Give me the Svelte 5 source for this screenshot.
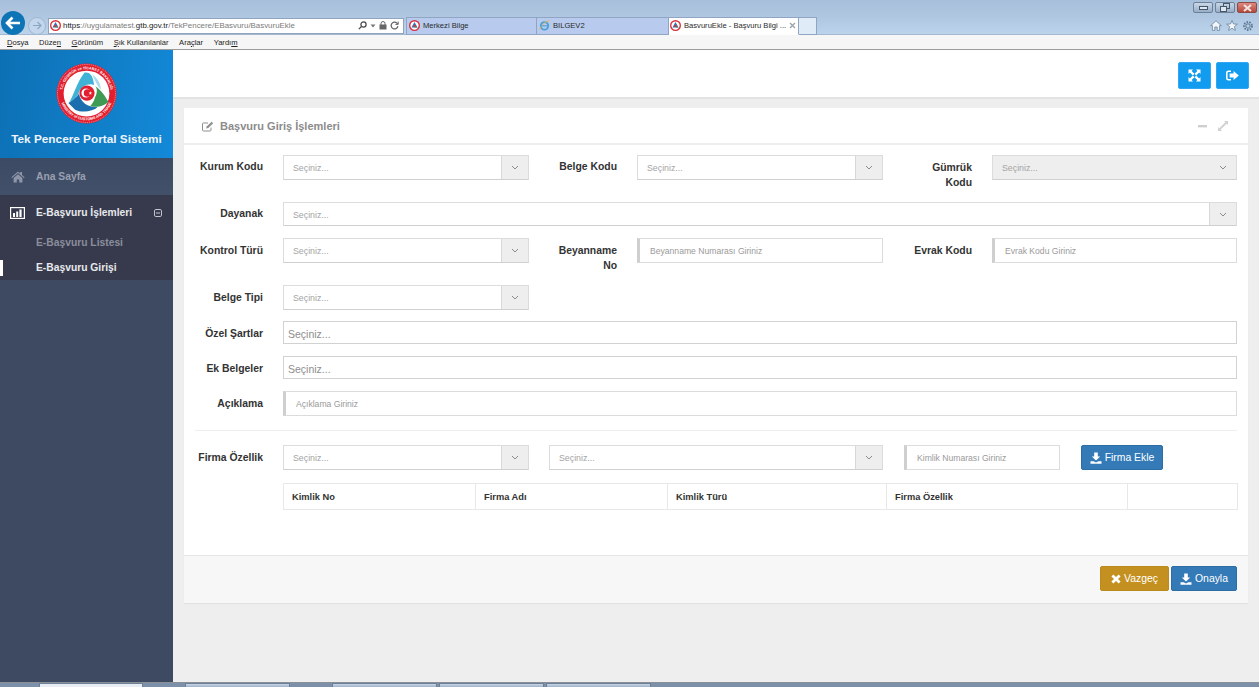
<script>
  const menus = [
    { pre: '', key: 'D', post: 'osya' },
    { pre: 'Düze', key: 'n', post: '' },
    { pre: '', key: 'G', post: 'örünüm' },
    { pre: '', key: 'Ş', post: 'ık Kullanılanlar' },
    { pre: 'Ara', key: 'ç', post: 'lar' },
    { pre: 'Yardı', key: 'm', post: '' }
  ];
  const columns = [
    { name: 'Kimlik No', width: 192 },
    { name: 'Firma Adı', width: 192 },
    { name: 'Kimlik Türü', width: 219 },
    { name: 'Firma Özellik', width: 241 },
    { name: '', width: 110 }
  ];
</script>

{#snippet favicon(size)}
  <svg class="favicon" width={size} height={size} viewBox="0 0 16 16">
    <circle cx="8" cy="8" r="7" fill="#fff" stroke="#d8303c" stroke-width="2" />
    <path d="M8 3 L12.5 11 H3.5 Z" fill="#2f78b7" />
    <path d="M8 8 L12.5 11 H8 Z" fill="#4f9a55" />
    <circle cx="8" cy="8.5" r="1.7" fill="#d8303c" />
  </svg>
{/snippet}

{#snippet download()}
  <svg class="btn-icon" width="12" height="12" viewBox="0 0 12 12" fill="#fff">
    <path d="M4.2 0.5 H7.8 V4.6 H10.2 L6 8.6 L1.8 4.6 H4.2 Z" />
    <path d="M0.5 9.2 H3.6 L6 10.6 L8.4 9.2 H11.5 V11.7 H0.5 Z" />
  </svg>
{/snippet}

{#snippet select(placeholder, cls = '')}
  <div class="select {cls}">
    <span class="value">{placeholder}</span>
    <span class="arrow">
      <svg width="8" height="5" viewBox="0 0 8 5" fill="none" stroke="#8b8b8b" stroke-width="1"><path d="M1 1 L4 4 L7 1" /></svg>
    </span>
  </div>
{/snippet}

<div class="page">
  <header class="browser">
    <div class="caption">
      <div class="win-btn">
        <svg width="9" height="4" viewBox="0 0 9 4"><rect x="0.5" y="0.5" width="8" height="3" fill="#dfe6ee" stroke="#44566c" /></svg>
      </div>
      <div class="win-btn">
        <svg width="10" height="9" viewBox="0 0 10 9" fill="none" stroke="#44566c"><rect x="3.5" y="0.5" width="6" height="5" /><rect x="0.5" y="3.5" width="6" height="5" fill="#dfe6ee" /></svg>
      </div>
      <div class="win-btn close">
        <svg width="9" height="8" viewBox="0 0 9 8" stroke="#f4e4e2" stroke-width="2"><path d="M1 1 L8 7 M8 1 L1 7" /></svg>
      </div>
    </div>

    <div class="toolbar">
      <div class="back">
        <svg width="16" height="14" viewBox="0 0 16 14" fill="none" stroke="#fff" stroke-width="2.6"><path d="M7.5 1.5 L2 7 L7.5 12.5 M2.5 7 H15" /></svg>
      </div>
      <div class="forward">
        <svg width="10" height="9" viewBox="0 0 10 9" fill="none" stroke="#8ba6c4" stroke-width="1.2"><path d="M5.5 1 L9 4.5 L5.5 8 M9 4.5 H1" /></svg>
      </div>
      <div class="address">
        {@render favicon(11)}
        <span class="url"><span class="strong">https</span>://uygulamatest.<span class="strong">gtb.gov.tr</span>/TekPencere/EBasvuru/BasvuruEkle</span>
        <span class="address-tools">
          <svg width="9" height="9" viewBox="0 0 9 9" fill="none" stroke="#444" stroke-width="1.2"><circle cx="5.5" cy="3.5" r="2.6" /><path d="M3.5 5.5 L0.8 8.2" /></svg>
          <svg width="6" height="4" viewBox="0 0 6 4" fill="#777"><path d="M0.5 0.5 H5.5 L3 3.5 Z" /></svg>
          <svg width="8" height="9" viewBox="0 0 8 9"><rect x="0.5" y="3.5" width="7" height="5" fill="#666" /><path d="M2 4 V2.5 a2 2 0 0 1 4 0 V4" fill="none" stroke="#666" /></svg>
          <svg width="9" height="9" viewBox="0 0 9 9" fill="none" stroke="#666" stroke-width="1.3"><path d="M7.6 3 A3.4 3.4 0 1 0 7.9 5.2" /><path d="M8.2 0.6 V3.4 H5.4" stroke-width="1" /></svg>
        </span>
      </div>
      <div class="tabs">
        <div class="tab">{@render favicon(11)}<span>Merkezi Bilge</span></div>
        <div class="tab">
          <svg class="favicon" width="11" height="11" viewBox="0 0 16 16" fill="none">
            <circle cx="8" cy="8.5" r="5.5" stroke="#4c9fd8" stroke-width="2.6" />
            <path d="M1 14 C4 6 10 2 15 1" stroke="#e3b64a" stroke-width="1.4" />
            <path d="M3 8.5 H13" stroke="#4c9fd8" stroke-width="1.6" />
          </svg>
          <span>BILGEV2</span>
        </div>
        <div class="tab active">
          {@render favicon(11)}
          <span class="tab-title">BasvuruEkle - Başvuru Bilgi ...</span>
          <svg class="tab-close" width="7" height="7" viewBox="0 0 7 7" stroke="#9aa3ad" stroke-width="1.4"><path d="M1 1 L6 6 M6 1 L1 6" /></svg>
        </div>
        <div class="tab new"></div>
      </div>
      <div class="ie-tools">
        <svg width="12" height="11" viewBox="0 0 12 11" fill="#f2f5f8" stroke="#5f7894" stroke-width="0.7"><path d="M6 0.8 L11.3 5.6 H9.6 V10.4 H7.2 V7 H4.8 V10.4 H2.4 V5.6 H0.7 Z" /></svg>
        <svg width="12" height="11" viewBox="0 0 12 11" fill="#f2f5f8" stroke="#5f7894" stroke-width="0.7"><path d="M6 0.5 L7.5 4 L11.4 4.2 L8.4 6.6 L9.4 10.4 L6 8.3 L2.6 10.4 L3.6 6.6 L0.6 4.2 L4.5 4 Z" /></svg>
        <svg width="12" height="12" viewBox="0 0 12 12" fill="none"><circle cx="6" cy="6" r="2.2" stroke="#5f7894" /><circle cx="6" cy="6" r="4" stroke="#5f7894" stroke-width="1.8" stroke-dasharray="1.6 1.2" /></svg>
      </div>
    </div>

    <nav class="menubar">
      {#each menus as m}
        <span>{m.pre}<u>{m.key}</u>{m.post}</span>
      {/each}
    </nav>
  </header>

  <div class="app">
    <aside class="sidebar">
      <div class="brand">
        <svg width="61" height="61" viewBox="0 0 64 64">
          <defs>
            <path id="ringTop" d="M6.5 32 A25.5 25.5 0 0 1 57.5 32" />
            <path id="ringBottom" d="M4 32 A28 28 0 0 0 60 32" />
          </defs>
          <circle cx="32" cy="32" r="31.5" fill="#e21f2f" />
          <circle cx="32" cy="32" r="30.4" fill="none" stroke="#fff" stroke-width="0.5" stroke-dasharray="1 1" />
          <circle cx="32" cy="32" r="24" fill="#fff" />
          <text class="ring-text"><textPath href="#ringTop" startOffset="50%" text-anchor="middle">T.C. GÜMRÜK ve TİCARET BAKANLIĞI</textPath></text>
          <text class="ring-text"><textPath href="#ringBottom" startOffset="50%" text-anchor="middle">MINISTRY of CUSTOMS AND TRADE</textPath></text>
          <path d="M38 12 C44 16 47 22 47 28 C44 25 41 19 38 12 Z" fill="#a9d9ef" />
          <path d="M30 10 C36 9 39 14 40 23 C34 21 27 24 24 31 C22 36 20 38 14 41 C19 33 22 20 30 10 Z" fill="#3fb2d6" />
          <path d="M13 42 C18 39 22 36 24 32 C26 42 34 47 44 46 C38 52 26 52 20 49 Z" fill="#1b6fae" />
          <path d="M41 36 C44 30 43 26 41 24 C48 29 52 35 55 41 C50 46 42 47 36 45 C38 43 40 40 41 36 Z" fill="#3f9a54" />
          <circle cx="32.5" cy="31.5" r="8" fill="#e21f2f" />
          <circle cx="31.5" cy="31.5" r="4.8" fill="#fff" />
          <circle cx="33" cy="31.5" r="3.9" fill="#e21f2f" />
          <path d="M36 29.7 L36.5 31 L37.9 31 L36.8 31.8 L37.2 33.2 L36 32.4 L34.9 33.2 L35.3 31.8 L34.2 31 L35.6 31 Z" fill="#fff" />
        </svg>
        <div class="brand-name">Tek Pencere Portal Sistemi</div>
      </div>

      <div class="nav-home">
        <svg width="14" height="12" viewBox="0 0 14 12" fill="#8d96a8"><path d="M7 0.6 L9.2 2.5 V1 H11 V4 L13.6 6.3 L12.9 7 L7 2 L1.1 7 L0.4 6.3 Z" /><path d="M2.6 7 L7 3.3 L11.4 7 V11.6 H8.2 V8.4 H5.8 V11.6 H2.6 Z" /></svg>
        <span>Ana Sayfa</span>
      </div>

      <div class="nav-group">
        <div class="nav-head">
          <svg width="15" height="12" viewBox="0 0 15 12">
            <rect x="0.6" y="0.6" width="13.8" height="10.8" fill="none" stroke="#fff" stroke-width="1.2" />
            <path d="M3 6 H5 V10 H3 Z M6.2 4.5 H8.2 V10 H6.2 Z M9.4 2.5 H11.6 V10 H9.4 Z" fill="#fff" />
          </svg>
          <span class="nav-head-label">E-Başvuru İşlemleri</span>
          <svg width="8" height="8" viewBox="0 0 8 8" fill="none" stroke="#c3c6cf"><rect x="0.5" y="0.5" width="7" height="7" rx="1.4" /><path d="M2 4 H6" /></svg>
        </div>
        <div class="nav-sub">E-Başvuru Listesi</div>
        <div class="nav-sub current">E-Başvuru Girişi</div>
      </div>
    </aside>

    <main class="content">
      <div class="topbar">
        <button class="square" aria-label="Tam ekran">
          <svg width="13" height="13" viewBox="0 0 13 13" fill="#fff">
            <path d="M0.5 0.5 H5 L3.6 1.9 L6.5 4.8 L4.8 6.5 L1.9 3.6 L0.5 5 Z" />
            <path d="M12.5 0.5 V5 L11.1 3.6 L8.2 6.5 L6.5 4.8 L9.4 1.9 L8 0.5 Z" />
            <path d="M0.5 12.5 V8 L1.9 9.4 L4.8 6.5 L6.5 8.2 L3.6 11.1 L5 12.5 Z" />
            <path d="M12.5 12.5 H8 L9.4 11.1 L6.5 8.2 L8.2 6.5 L11.1 9.4 L12.5 8 Z" />
          </svg>
        </button>
        <button class="square" aria-label="Çıkış">
          <svg width="13" height="11" viewBox="0 0 13 11" fill="#fff">
            <path d="M5 0.5 V2 H2.6 Q1.6 2 1.6 3 V8 Q1.6 9 2.6 9 H5 V10.5 H2.4 Q0 10.5 0 8.2 V2.8 Q0 0.5 2.4 0.5 Z" />
            <path d="M7.6 1 L12.8 5.5 L7.6 10 V7.4 H3.6 V3.6 H7.6 Z" />
          </svg>
        </button>
      </div>

      <section class="panel">
        <div class="panel-head">
          <svg width="12" height="11" viewBox="0 0 12 11" fill="none" stroke="#8f8f8f" stroke-width="1">
            <path d="M9 6.6 V9 Q9 10 8 10 H1.5 Q0.5 10 0.5 9 V3 Q0.5 2 1.5 2 H6" />
            <path d="M4.2 7.6 L4.6 5.4 L9.6 0.8 L11.2 2.3 L6.3 7.1 Z" fill="#8f8f8f" stroke="none" />
          </svg>
          <span class="panel-title">Başvuru Giriş İşlemleri</span>
          <span class="panel-tools">
            <svg width="9" height="3" viewBox="0 0 9 3"><rect width="9" height="2.4" fill="#cfcfcf" /></svg>
            <svg width="10" height="10" viewBox="0 0 10 10" fill="#d2d2d2"><path d="M6 0 H10 V4 L8.6 2.7 L2.7 8.6 L4 10 H0 V6 L1.3 7.3 L7.3 1.3 Z" /></svg>
          </span>
        </div>

        <div class="panel-body">
          <div class="form-grid">
            <label class="tight">Kurum Kodu</label>
            {@render select('Seçiniz...')}
            <label class="tight">Belge Kodu</label>
            {@render select('Seçiniz...')}
            <label class="wrap">Gümrük Kodu</label>
            {@render select('Seçiniz...', 'disabled')}

            <label class="tight">Dayanak</label>
            <div class="wide">{@render select('Seçiniz...', 'short')}</div>

            <label>Kontrol Türü</label>
            {@render select('Seçiniz...')}
            <label class="wrap">Beyanname No</label>
            <div class="input">Beyanname Numarası Giriniz</div>
            <label>Evrak Kodu</label>
            <div class="input">Evrak Kodu Giriniz</div>

            <label>Belge Tipi</label>
            <div class="fill-row">{@render select('Seçiniz...')}</div>

            <label class="row-start">Özel Şartlar</label>
            <div class="wide plain">Seçiniz...</div>

            <label>Ek Belgeler</label>
            <div class="wide plain">Seçiniz...</div>

            <label>Açıklama</label>
            <div class="wide input">Açıklama Giriniz</div>
          </div>

          <hr />

          <div class="firma-row">
            <label>Firma Özellik</label>
            <div class="firma-a">{@render select('Seçiniz...')}</div>
            <div class="firma-b">{@render select('Seçiniz...')}</div>
            <div class="input firma-id">Kimlik Numarası Giriniz</div>
            <button class="btn blue firma-btn">{@render download()}Firma Ekle</button>
          </div>

          <table>
            <thead>
              <tr>
                {#each columns as c}
                  <th style="width:{c.width}px">{c.name}</th>
                {/each}
              </tr>
            </thead>
          </table>
        </div>

        <div class="panel-foot">
          <button class="btn gold">
            <svg class="btn-icon" width="10" height="10" viewBox="0 0 10 10" stroke="#fff" stroke-width="2.8"><path d="M1.4 1.4 L8.6 8.6 M8.6 1.4 L1.4 8.6" /></svg>
            Vazgeç
          </button>
          <button class="btn blue">{@render download()}Onayla</button>
        </div>
      </section>
    </main>
  </div>

  <footer class="taskbar">
    <div class="task first"></div>
    <div class="task t2"></div>
    <div class="task t3"></div>
    <div class="task"></div>
    <div class="task"></div>
  </footer>
</div>

<style>
  :global(body) { margin: 0; background: #eee; overflow: hidden; }
  .page {
    width: 1259px;
    height: 687px;
    display: flex;
    flex-direction: column;
    overflow: hidden;
    font-family: "Liberation Sans", Arial, sans-serif;
    color: #333;
  }

  /* browser chrome */
  .browser { flex: none; height: 50px; box-sizing: border-box; border-bottom: 1px solid #9c9c9c; background: #f6f6f6; }
  .caption {
    height: 17px;
    display: flex;
    justify-content: flex-end;
    gap: 2px;
    padding: 2px 2px 0 0;
    box-sizing: border-box;
    background: linear-gradient(#a7bfda, #afc7e0);
  }
  .win-btn {
    width: 20px;
    height: 11px;
    border: 1px solid #6c8097;
    border-radius: 2px;
    background: linear-gradient(#cad8e7, #98aec6);
    display: flex;
    align-items: center;
    justify-content: center;
    box-sizing: border-box;
  }
  .win-btn.close { background: linear-gradient(#dd8a80, #b5473b); border-color: #8e4a44; }
  .toolbar {
    height: 18px;
    display: flex;
    align-items: center;
    background: linear-gradient(#afc7e0, #bcd3ec);
    border-bottom: 1px solid #a3b8d0;
    box-sizing: border-box;
  }
  .back {
    flex: none;
    width: 24px;
    height: 24px;
    margin: -6px 0 0 1px;
    border-radius: 50%;
    background: #0d74b6;
    display: flex;
    align-items: center;
    justify-content: center;
  }
  .forward {
    flex: none;
    width: 16px;
    height: 16px;
    margin: 0 0 0 3px;
    border-radius: 50%;
    border: 1px solid #9fb6d2;
    background: #c3d6ec;
    display: flex;
    align-items: center;
    justify-content: center;
  }
  .address {
    flex: none;
    width: 356px;
    height: 16px;
    margin-left: 2px;
    box-sizing: border-box;
    border: 1px solid #8fa5bf;
    background: #fff;
    display: flex;
    align-items: center;
    gap: 2px;
    padding-left: 1px;
    font: 7.9px "Liberation Sans", sans-serif;
    color: #7b7b7b;
  }
  .url { white-space: nowrap; }
  .strong { color: #222; }
  .address-tools { margin-left: auto; display: flex; align-items: center; gap: 3px; padding-right: 4px; }
  .favicon { flex: none; }
  .tabs { display: flex; margin-left: 2px; height: 18px; }
  .tab {
    width: 132px;
    box-sizing: border-box;
    background: #b8cbee;
    border: 1px solid #8fa5c2;
    border-left-width: 0;
    display: flex;
    align-items: center;
    gap: 3px;
    padding-left: 2px;
    font: 7.6px "Liberation Sans", sans-serif;
    color: #2a2a2a;
    white-space: nowrap;
  }
  .tab:first-child { border-left-width: 1px; width: 131px; padding-left: 2px; }
  .tab.active { width: 130px; background: #fff; border-bottom-color: #fff; padding-left: 1px; }
  .tab-title { flex: 1; }
  .tab-close { flex: none; margin-right: 3px; }
  .tab.new { width: 18px; background: #e0ebf8; padding: 0; }
  .ie-tools { margin-left: auto; display: flex; align-items: center; gap: 4px; padding-right: 5px; }
  .menubar {
    height: 14px;
    display: flex;
    align-items: center;
    gap: 10.5px;
    padding-left: 7px;
    font: 7.6px "Liberation Sans", sans-serif;
    color: #222;
  }

  /* app */
  .app { flex: 1; display: flex; min-height: 0; }
  .sidebar { flex: none; width: 173px; background: #3e4a62; display: flex; flex-direction: column; }
  .brand {
    height: 108px;
    background: linear-gradient(100deg, #0d70b4, #1389d8);
    display: flex;
    flex-direction: column;
    align-items: center;
    padding-top: 13px;
    box-sizing: border-box;
  }
  .ring-text { font: bold 3.9px "Liberation Sans", sans-serif; fill: #fff; }
  .brand-name { margin-top: 8px; color: #eef5fb; font-size: 11.8px; font-weight: bold; }
  .nav-home {
    height: 37px;
    display: flex;
    align-items: center;
    gap: 11px;
    padding-left: 11px;
    background: linear-gradient(#3c4a63, #425069);
    color: #99a0b0;
    font-size: 10.3px;
    font-weight: bold;
  }
  .nav-group { background: #373a4c; height: 85px; display: flex; flex-direction: column; }
  .nav-head {
    height: 35px;
    display: flex;
    align-items: center;
    padding: 0 11px 0 10px;
    color: #e8e9ec;
    font-size: 10.3px;
    font-weight: bold;
  }
  .nav-head-label { flex: 1; margin-left: 11px; }
  .nav-sub {
    height: 25px;
    display: flex;
    align-items: center;
    padding-left: 36px;
    font-size: 10.3px;
    font-weight: bold;
    color: #8a8e9c;
    box-sizing: border-box;
  }
  .nav-sub.current { color: #e8e9ec; padding-left: 0; }
  .nav-sub.current::before { content: ''; width: 3px; height: 16px; margin-right: 33px; background: #fff; }

  .content { flex: 1; min-width: 0; background: #eee; }
  .topbar {
    height: 47px;
    background: #fff;
    border-bottom: 2px solid #e3e3e3;
    display: flex;
    justify-content: flex-end;
    align-items: flex-start;
    gap: 5px;
    padding: 0 10px 0 0;
  }
  .square {
    width: 33px;
    height: 27px;
    margin-top: 12px;
    border: 1px solid #31a6f3;
    border-radius: 2px;
    background: #119cf0;
    padding: 0;
    display: flex;
    align-items: center;
    justify-content: center;
  }

  .panel { margin: 9px 11px 0; background: #fff; height: 495px; display: flex; flex-direction: column; box-shadow: 0 1px 1px rgba(0,0,0,0.05); }
  .panel-head {
    flex: none;
    height: 37px;
    box-sizing: border-box;
    border-bottom: 2px solid #eee;
    display: flex;
    align-items: center;
    padding: 1px 20px 0 18px;
    gap: 6px;
  }
  .panel-title { font-size: 11px; font-weight: bold; color: #8c8c8c; }
  .panel-tools { margin-left: auto; display: flex; align-items: center; gap: 11px; }

  .panel-body { flex: 1; padding: 10px 11px 0; }
  .form-grid {
    display: grid;
    grid-template-columns: 68px 246px 68px 246px 69px 245px;
    grid-template-rows: 47px 36px 47px 36px 35px 35px 25px;
    column-gap: 20px;
    align-items: start;
  }
  label {
    font-size: 10.4px;
    font-weight: bold;
    color: #333;
    text-align: right;
    line-height: 14.5px;
    padding-top: 6px;
    display: block;
    white-space: nowrap;
  }
  label.tight { padding-top: 5px; }
  label.wrap { white-space: normal; }
  label.row-start { grid-column: 1; }
  .wide { grid-column: 2 / -1; }
  .fill-row { grid-column: 2 / 3; }
  .select {
    display: flex;
    height: 25px;
    box-sizing: border-box;
    border: 1px solid #dcdcdc;
    border-bottom-color: #d0d0d0;
    background: #fff;
    font-size: 8.8px;
    color: #a4a4a4;
  }
  .select.short { height: 24px; }
  .value { flex: 1; padding: 7px 0 0 9px; }
  .arrow {
    flex: none;
    width: 27px;
    box-sizing: border-box;
    background: #eee;
    border-left: 1px solid #d8d8d8;
    display: flex;
    align-items: center;
    justify-content: center;
  }
  .select.disabled { background: #eee; }
  .select.disabled .arrow { border-left: 0; }
  .plain {
    height: 23px;
    box-sizing: border-box;
    border: 1px solid #d2d2d2;
    padding: 6px 0 0 4px;
    font-size: 10.5px;
    color: #8e8e8e;
  }
  .input {
    height: 25px;
    box-sizing: border-box;
    border: 1px solid #dcdcdc;
    border-left: 3px solid #cfcfcf;
    padding: 7px 0 0 10px;
    font-size: 8.6px;
    color: #9a9a9a;
  }
  hr { border: 0; border-top: 1px solid #eee; margin: 14px 0 14px; }

  .firma-row { display: flex; align-items: flex-start; }
  .firma-row label { flex: none; width: 68px; margin-right: 20px; }
  .firma-a { flex: none; width: 246px; margin-right: 20px; }
  .firma-b { flex: none; width: 334px; margin-right: 21px; }
  .firma-id { flex: none; width: 156px; margin-right: 21px; }
  .firma-btn { width: 82px; height: 25px; }

  .btn {
    height: 25px;
    padding: 0;
    border-radius: 2px;
    font: 10.4px "Liberation Sans", sans-serif;
    color: #fff;
    display: flex;
    align-items: center;
    justify-content: center;
    gap: 3px;
  }
  .btn.blue { background: #337ab7; border: 1px solid #2e6da4; }
  .btn.gold { background: #c49120; border: 1px solid #b98a1e; }

  table {
    margin: 13px 0 0 88px;
    width: 954px;
    border-collapse: collapse;
    table-layout: fixed;
  }
  th {
    height: 26px;
    box-sizing: border-box;
    border: 1px solid #e8e8e8;
    padding: 0 8px;
    text-align: left;
    font-size: 9.3px;
    color: #333;
  }

  .panel-foot {
    flex: none;
    height: 48px;
    box-sizing: border-box;
    border-top: 1px solid #e6e6e6;
    background: #f7f7f7;
    display: flex;
    justify-content: flex-end;
    align-items: flex-start;
    gap: 2px;
    padding: 10px 11px 0 0;
  }
  .panel-foot .gold { width: 69px; }
  .panel-foot .blue { width: 66px; }

  .taskbar {
    flex: none;
    height: 5px;
    background: #7c90aa;
    border-top: 1px solid #8a8f98;
    box-sizing: border-box;
    display: flex;
    gap: 2px;
    padding-left: 186px;
  }
  .task { width: 105px; background: linear-gradient(#c8d6e6, #9fb2ca); border: 1px solid #6d7f95; border-bottom: 0; box-sizing: border-box; }
  .task.first { width: 104px; background: #e8edf3; margin-left: -147px; margin-right: 40px; }
  .task.t2 { margin-right: 40px; }
</style>
